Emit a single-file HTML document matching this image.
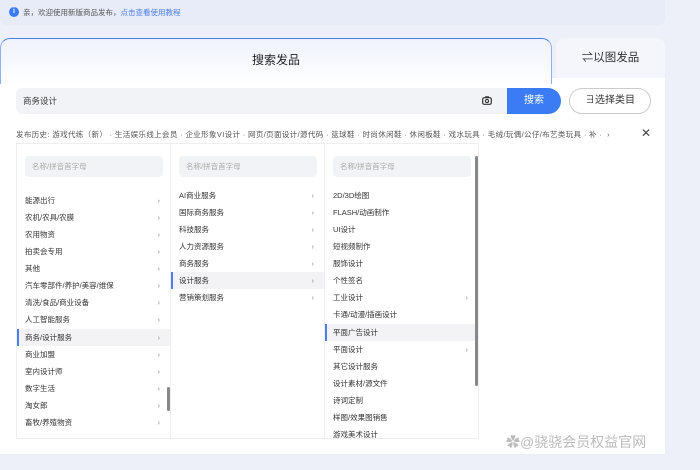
<!DOCTYPE html>
<html><head><meta charset="utf-8"><style>
*{margin:0;padding:0;box-sizing:border-box}
body{width:700px;height:470px;background:#eef0f9;font-family:"Liberation Sans","Noto Sans CJK SC",sans-serif;color:#333;position:relative;overflow:hidden;font-size:8px}
.abs{position:absolute}
.notice{left:0;top:0;width:665px;height:25px;background:#e8ecf8;border-radius:0 0 6px 6px}
.card{left:0;top:78px;width:665px;height:376px;background:#fff}
.tab1{left:0;top:38px;width:552px;height:46px;border:1.5px solid #4a7ee8;border-left-color:#8fb0ee;border-right-color:#8fb0ee;border-bottom:none;border-radius:10px 10px 0 0;background:linear-gradient(#eef2fc,#fff);text-align:center;line-height:42px;font-size:12px;color:#222}
.tab2{left:556px;top:38px;width:109px;height:40px;background:#f5f6fb;border-radius:8px 8px 0 0;text-align:center;line-height:40px;font-size:11.5px;color:#333}
.inp{left:16px;top:88px;width:495px;height:26px;background:#f2f3f7;border-radius:6px 0 0 6px;line-height:26px;padding-left:7px;font-size:8.5px}
.btn{left:507px;top:88px;width:54px;height:26px;background:#3b7cf4;border-radius:0 13px 13px 0;color:#fff;text-align:center;line-height:26px;font-size:10px}
.sel{left:569px;top:88px;width:82px;height:26px;border:1px solid #ccc;border-radius:13px;text-align:center;line-height:24px;font-size:10px}
.hist{left:16px;top:129px;font-size:7.5px;color:#555;white-space:nowrap;letter-spacing:0.35px}
.panel{left:16px;top:143px;width:463px;height:296px;border:1px solid #eee}
.col{position:absolute;top:0;height:294px;width:154px;border-right:1px solid #eee;overflow:hidden}
.sb{position:absolute;left:8px;top:12px;width:138px;height:21px;background:#f2f3f6;border-radius:4px;color:#aaa;line-height:21px;padding-left:7px;font-size:7.5px}
.it{position:absolute;left:0;width:153px;height:17px;line-height:17px;padding-left:8px;font-size:7.5px;color:#333}
.it.a{background:#f3f3f5;border-left:2px solid #4a7ee8;padding-left:6px}
.it i{position:absolute;right:10px;font-style:normal;color:#888}
</style></head><body>
<div class="abs notice"><span class="abs" style="left:9px;top:7px;width:10px;height:10px;border-radius:50%;background:#3b7cf4;color:#fff;font-size:7px;text-align:center;line-height:10px;font-weight:bold">i</span><span class="abs" style="left:23px;top:7px;font-size:7.5px;color:#555">亲，欢迎使用新版商品发布，<span style="color:#4a7ee8">点击查看使用教程</span></span></div>
<div class="abs card"></div>
<div class="abs tab1">搜索发品</div>
<div class="abs tab2">⇌以图发品</div>
<div class="abs inp">商务设计</div>
<svg class="abs" style="left:482px;top:96px" width="10" height="9" viewBox="0 0 10 9"><rect x="0.7" y="1.7" width="8.6" height="6.6" rx="1.5" fill="none" stroke="#333" stroke-width="1.2"/><circle cx="5" cy="5" r="1.6" fill="none" stroke="#333" stroke-width="1.1"/><rect x="3" y="0.3" width="4" height="1.5" fill="#333"/></svg>
<div class="abs btn">搜索</div>
<div class="abs sel">∃选择类目</div>
<div class="abs hist">发布历史: 游戏代练（新） · 生活娱乐线上会员 · 企业形象VI设计 · 网页/页面设计/源代码 · 篮球鞋 · 时尚休闲鞋 · 休闲板鞋 · 戏水玩具 · 毛绒/玩偶/公仔/布艺类玩具 · 补 · &nbsp;›</div>
<div class="abs" style="left:641px;top:126px;font-size:12px;color:#444">✕</div>
<div class="abs panel">
<div class="col" style="left:0">
<div class="sb">名称/拼音首字母</div>
<div class="it" style="top:48px">能源出行<i>›</i></div>
<div class="it" style="top:65px">农机/农具/农膜<i>›</i></div>
<div class="it" style="top:82px">农用物资<i>›</i></div>
<div class="it" style="top:99px">拍卖会专用<i>›</i></div>
<div class="it" style="top:116px">其他<i>›</i></div>
<div class="it" style="top:133px">汽车零部件/养护/美容/维保<i>›</i></div>
<div class="it" style="top:150px">清洗/食品/商业设备<i>›</i></div>
<div class="it" style="top:167px">人工智能服务<i>›</i></div>
<div class="it a" style="top:185px">商务/设计服务<i>›</i></div>
<div class="it" style="top:202px">商业加盟<i>›</i></div>
<div class="it" style="top:219px">室内设计师<i>›</i></div>
<div class="it" style="top:236px">数字生活<i>›</i></div>
<div class="it" style="top:253px">淘女郎<i>›</i></div>
<div class="it" style="top:270px">畜牧/养殖物资<i>›</i></div>
<div class="abs" style="left:150px;top:243px;width:3px;height:24px;background:#888;border-radius:2px"></div>
</div>
<div class="col" style="left:154px">
<div class="sb">名称/拼音首字母</div>
<div class="it" style="top:43px">AI商业服务<i>›</i></div>
<div class="it" style="top:60px">国际商务服务<i>›</i></div>
<div class="it" style="top:77px">科技服务<i>›</i></div>
<div class="it" style="top:94px">人力资源服务<i>›</i></div>
<div class="it" style="top:111px">商务服务<i>›</i></div>
<div class="it a" style="top:128px">设计服务<i>›</i></div>
<div class="it" style="top:145px">营销策划服务<i>›</i></div>
</div>
<div class="col" style="left:308px;border-right:none">
<div class="sb">名称/拼音首字母</div>
<div class="it" style="top:43px">2D/3D绘图</div>
<div class="it" style="top:60px">FLASH/动画制作</div>
<div class="it" style="top:77px">UI设计</div>
<div class="it" style="top:94px">短视频制作</div>
<div class="it" style="top:111px">服饰设计</div>
<div class="it" style="top:128px">个性签名</div>
<div class="it" style="top:145px">工业设计<i>›</i></div>
<div class="it" style="top:162px">卡通/动漫/插画设计</div>
<div class="it a" style="top:180px">平面广告设计</div>
<div class="it" style="top:197px">平面设计<i>›</i></div>
<div class="it" style="top:214px">其它设计服务</div>
<div class="it" style="top:231px">设计素材/源文件</div>
<div class="it" style="top:248px">诗词定制</div>
<div class="it" style="top:265px">样图/效果图销售</div>
<div class="it" style="top:282px">游戏美术设计</div>
<div class="abs" style="left:150px;top:12px;width:3px;height:230px;background:#888;border-radius:2px"></div>
</div>
</div>
<div class="abs" style="left:506px;top:432px;font-size:14px;color:#bbb;white-space:nowrap">✿@骁骁会员权益官网</div>
</body></html>
